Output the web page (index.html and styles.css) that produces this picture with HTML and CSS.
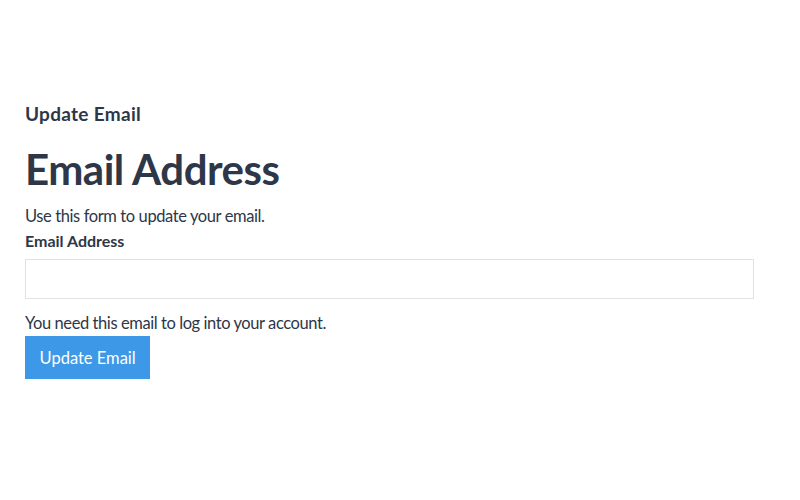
FILE: index.html
```html
<!DOCTYPE html>
<html lang="en">
<head>
<meta charset="utf-8">
<title>Update Email</title>
<link rel="stylesheet" href="styles.css">
</head>
<body>
<main class="page">
  <h2 class="section-title">Update Email</h2>
  <h1 class="page-title">Email Address</h1>
  <p class="intro">Use this form to update your email.</p>
  <form class="form">
    <label class="label" for="email">Email Address</label>
    <input class="input" id="email" type="email">
    <p class="help">You need this email to log into your account.</p>
    <button class="button" type="button">Update Email</button>
  </form>
</main>
</body>
</html>
```
FILE: styles.css
```css
html, body {
  margin: 0;
  padding: 0;
  background: #ffffff;
}
body {
  font-family: "Lato", "Noto Sans", sans-serif;
  color: #2d3748;
}
.page {
  padding: 100px 46px 0 25px;
}
.section-title {
  margin: 0;
  font-size: 19px;
  line-height: 27px;
  font-weight: 700;
  letter-spacing: 0.3px;
}
.page-title {
  margin: 15px 0 0;
  font-size: 42px;
  line-height: 54px;
  font-weight: 700;
  letter-spacing: -0.5px;
}
.intro {
  margin: 8px 0 0;
  font-size: 16.5px;
  line-height: 24px;
  letter-spacing: -0.4px;
}
.form {
  display: flex;
  flex-direction: column;
  align-items: flex-start;
}
.label {
  font-size: 16px;
  line-height: 24px;
  font-weight: 700;
  margin-top: 1px;
}
.input {
  box-sizing: border-box;
  width: 100%;
  height: 40px;
  margin: 6px 0 0;
  border: 1px solid #e2e2e2;
  background: #fff;
  padding: 0 12px;
  font: inherit;
}
.help {
  margin: 13px 0 0;
  font-size: 16.5px;
  line-height: 22px;
  letter-spacing: -0.42px;
}
.button {
  margin-top: 2px;
  height: 43px;
  padding: 0 14.5px;
  border: 0;
  background: #3d99e8;
  color: #ffffff;
  font-family: inherit;
  font-size: 16.5px;
}
```
